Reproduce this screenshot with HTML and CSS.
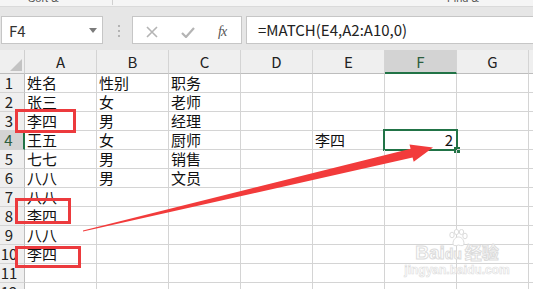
FILE: index.html
```html
<!DOCTYPE html>
<html lang="zh-CN">
<head>
<meta charset="utf-8">
<title>MATCH</title>
<link rel="stylesheet" href="styles.css">
</head>
<body>
<div class="app">
  <div class="ribbon-tail">
    <div class="ribbon-row">
      <span class="rt rt1">Sort &amp;</span>
      <span class="rt rt2">▫</span>
      <span class="rt-sep"></span>
      <span class="rt rt3">Find &amp;</span>
    </div>
  </div>

  <div class="formula-bar">
    <div class="namebox">
      <span class="namebox-text">F4</span>
      <svg class="namebox-caret" width="8" height="5" viewBox="0 0 8 5"><path d="M0 0H8L4 5Z" fill="#7b7b7b"/></svg>
    </div>
    <div class="grip"><i></i><i></i><i></i></div>
    <div class="fx-buttons">
      <svg class="fx-cancel" width="12" height="12" viewBox="0 0 12 12"><path d="M1 1L11 11M11 1L1 11" stroke="#b4b4b4" stroke-width="1.6" fill="none"/></svg>
      <svg class="fx-enter" width="14" height="11" viewBox="0 0 14 11"><path d="M1 6L5 10L13 1" stroke="#b4b4b4" stroke-width="2.2" fill="none"/></svg>
      <span class="fx-label">fx</span>
    </div>
    <div class="formula-input">=MATCH(E4,A2:A10,0)</div>
  </div>

  <div class="sheet">
    <div class="corner"><svg width="12" height="12" viewBox="0 0 12 12"><path d="M12 0V12H0Z" fill="#c3c3c3"/></svg></div>
    <div class="colhead">A</div>
    <div class="colhead">B</div>
    <div class="colhead">C</div>
    <div class="colhead">D</div>
    <div class="colhead">E</div>
    <div class="colhead is-active">F</div>
    <div class="colhead">G</div>
    <div class="colhead colhead-rest"></div>

    <div class="rowhead">1</div><div class="cell">姓名</div><div class="cell">性别</div><div class="cell">职务</div><div class="cell"></div><div class="cell"></div><div class="cell"></div><div class="cell"></div><div class="cell cell-rest"></div>
    <div class="rowhead">2</div><div class="cell">张三</div><div class="cell">女</div><div class="cell">老师</div><div class="cell"></div><div class="cell"></div><div class="cell"></div><div class="cell"></div><div class="cell cell-rest"></div>
    <div class="rowhead">3</div><div class="cell">李四</div><div class="cell">男</div><div class="cell">经理</div><div class="cell"></div><div class="cell"></div><div class="cell"></div><div class="cell"></div><div class="cell cell-rest"></div>
    <div class="rowhead is-active">4</div><div class="cell">王五</div><div class="cell">女</div><div class="cell">厨师</div><div class="cell"></div><div class="cell">李四</div><div class="cell cell-num is-selected">2<span class="selection"><span class="fill-handle"></span></span></div><div class="cell"></div><div class="cell cell-rest"></div>
    <div class="rowhead">5</div><div class="cell">七七</div><div class="cell">男</div><div class="cell">销售</div><div class="cell"></div><div class="cell"></div><div class="cell"></div><div class="cell"></div><div class="cell cell-rest"></div>
    <div class="rowhead">6</div><div class="cell">八八</div><div class="cell">男</div><div class="cell">文员</div><div class="cell"></div><div class="cell"></div><div class="cell"></div><div class="cell"></div><div class="cell cell-rest"></div>
    <div class="rowhead">7</div><div class="cell">八八</div><div class="cell"></div><div class="cell"></div><div class="cell"></div><div class="cell"></div><div class="cell"></div><div class="cell"></div><div class="cell cell-rest"></div>
    <div class="rowhead">8</div><div class="cell">李四</div><div class="cell"></div><div class="cell"></div><div class="cell"></div><div class="cell"></div><div class="cell"></div><div class="cell"></div><div class="cell cell-rest"></div>
    <div class="rowhead">9</div><div class="cell">八八</div><div class="cell"></div><div class="cell"></div><div class="cell"></div><div class="cell"></div><div class="cell"></div><div class="cell"></div><div class="cell cell-rest"></div>
    <div class="rowhead">10</div><div class="cell">李四</div><div class="cell"></div><div class="cell"></div><div class="cell"></div><div class="cell"></div><div class="cell"></div><div class="cell"></div><div class="cell cell-rest"></div>
    <div class="rowhead">11</div><div class="cell"></div><div class="cell"></div><div class="cell"></div><div class="cell"></div><div class="cell"></div><div class="cell"></div><div class="cell"></div><div class="cell cell-rest"></div>
    <div class="rowhead">12</div><div class="cell"></div><div class="cell"></div><div class="cell"></div><div class="cell"></div><div class="cell"></div><div class="cell"></div><div class="cell"></div><div class="cell cell-rest"></div>
  </div>

  <svg class="annotations" width="533" height="289" viewBox="0 0 533 289">
    <g fill="none" stroke="#ec3a3d" stroke-width="3">
      <rect x="16.5" y="110.5" width="58" height="21"/>
      <rect x="16.5" y="199.5" width="53" height="23"/>
      <rect x="16.5" y="247.5" width="63" height="19"/>
    </g>
    <path fill="#f23b3b" d="M83 230.6 L410.6 148.7 L409.5 144.4 L433 147.6 L413.7 161.8 L412.6 157.5 L83 231.6 Z"/>
  </svg>

  <div class="watermark">
    <svg class="wm-paw" width="22" height="18" viewBox="0 0 22 18">
      <g fill="#fff" stroke="#dcdcdc" stroke-width="1">
        <ellipse cx="5" cy="6" rx="2.2" ry="2.8"/>
        <ellipse cx="9.5" cy="3" rx="2.2" ry="2.6"/>
        <ellipse cx="14.5" cy="3" rx="2.2" ry="2.6"/>
        <ellipse cx="18" cy="7" rx="2.2" ry="2.8"/>
        <path d="M6 15 C6 10 9 8 11.5 8 C14 8 17 10 17 15 C17 17 14 17 11.5 16 C9 17 6 17 6 15Z"/>
      </g>
    </svg>
    <div class="wm-brand"><span class="wm-bai">Bai</span><span class="wm-du">du</span><span class="wm-jy">经验</span></div>
    <div class="wm-url">jingyan.baidu.com</div>
  </div>
</div>
</body>
</html>
```

FILE: styles.css
```css
* { box-sizing: border-box; }

html, body {
  margin: 0;
  padding: 0;
  background: #ffffff;
}

body {
  font-family: "Noto Sans CJK SC", "Noto Sans", sans-serif;
  color: #1a1a1a;
}

.app {
  position: relative;
  width: 533px;
  height: 289px;
  overflow: hidden;
}

/* bottom sliver of the ribbon */
.ribbon-tail {
  height: 7px;
  background: #f5f5f5;
  border-bottom: 1px solid #dadada;
  overflow: hidden;
}

.ribbon-row {
  display: flex;
  align-items: flex-start;
  height: 14px;
  margin-top: -9px;
  font-family: "Liberation Sans", sans-serif;
  font-size: 11px;
  line-height: 14px;
  color: #555;
}

.rt1 { margin-left: 28px; width: 66px; }
.rt2 { margin-left: 6px; width: 12px; font-size: 10px; color: #777; }
.rt-sep { width: 1px; height: 14px; background: #d0d0d0; margin-left: 0; }
.rt3 { margin-left: 334px; }

/* formula bar */
.formula-bar {
  display: flex;
  align-items: flex-start;
  height: 43px;
  background: #e6e6e6;
  padding-top: 9px;
}

.namebox {
  display: flex;
  align-items: center;
  justify-content: space-between;
  margin-left: 1px;
  width: 102px;
  height: 28px;
  background: #fff;
  border: 1px solid #c6c6c6;
  padding: 0 5px 0 7px;
}

.namebox-text {
  font-size: 15px;
  color: #333;
  line-height: 1;
  margin-top: 1px;
}

.namebox-caret { margin-top: 1px; }

.grip {
  display: flex;
  flex-direction: column;
  gap: 3px;
  margin: 9px 12px 0 15px;
}

.grip i {
  display: block;
  width: 2px;
  height: 2px;
  background: #b3b3b3;
}

.fx-buttons {
  display: flex;
  align-items: center;
  width: 110px;
  height: 28px;
  background: #fff;
  border: 1px solid #c6c6c6;
  padding-top: 4px;
}

.fx-cancel { margin-left: 13px; }
.fx-enter { margin-left: 23px; }

.fx-label {
  margin-left: 23px;
  font-family: "Liberation Serif", "DejaVu Serif", serif;
  font-style: italic;
  font-size: 14px;
  color: #555;
  letter-spacing: -1px;
}

.formula-input {
  flex: 1;
  margin-left: 4px;
  height: 28px;
  background: #fff;
  border: 1px solid #c6c6c6;
  border-right: none;
  padding-left: 11px;
  font-size: 15px;
  line-height: 26px;
  color: #222;
}

/* sheet grid */
.sheet {
  display: grid;
  grid-template-columns: 25px repeat(7, 72px) 1fr;
  grid-template-rows: 24px repeat(12, 19px);
  background: #fff;
}

.corner {
  background: #efefef;
  border-right: 1px solid #d0d0d0;
  border-bottom: 1px solid #bdbdbd;
  display: flex;
  align-items: flex-end;
  justify-content: flex-end;
  padding: 0 2px 2px 0;
}

.colhead {
  background: #efefef;
  border-right: 1px solid #d4d4d4;
  border-bottom: 1px solid #bdbdbd;
  text-align: center;
  font-size: 15px;
  line-height: 23px;
  color: #222;
}

.colhead.is-active {
  background: #d3d3d3;
  border-bottom: 2px solid #217346;
  color: #2d5e3e;
}

.colhead-rest { border-right: none; }

.rowhead {
  background: #efefef;
  border-right: 1px solid #bdbdbd;
  border-bottom: 1px solid #d4d4d4;
  padding-right: 6px;
  text-align: center;
  font-size: 15px;
  line-height: 18px;
  color: #222;
  white-space: nowrap;
}

.rowhead.is-active {
  background: #d3d3d3;
  border-right: 2px solid #217346;
  color: #2d5e3e;
}

.cell {
  position: relative;
  border-right: 1px solid #d4d4d4;
  border-bottom: 1px solid #d4d4d4;
  padding-left: 2px;
  font-size: 15px;
  line-height: 18px;
  color: #111;
  white-space: nowrap;
}

.cell-rest { border-right: none; }

.cell-num {
  text-align: right;
  padding: 0 3px 0 0;
}

.selection {
  position: absolute;
  left: -2px;
  top: -2px;
  width: 75px;
  height: 22px;
  border: 2px solid #217346;
}

.fill-handle {
  position: absolute;
  right: -4px;
  bottom: -4px;
  width: 6px;
  height: 6px;
  background: #217346;
}

/* annotations lying over the sheet */
.annotations {
  position: absolute;
  left: 0;
  top: 0;
  pointer-events: none;
}

.watermark {
  position: absolute;
  left: 407px;
  top: 229px;
  width: 100px;
  display: flex;
  flex-direction: column;
  align-items: center;
  pointer-events: none;
}

.wm-paw { margin-left: 2px; }

.wm-brand {
  display: flex;
  align-items: baseline;
  margin-top: -5px;
  font-family: "Liberation Sans", sans-serif;
  font-weight: bold;
  font-size: 19px;
  line-height: 20px;
  color: #fff;
  -webkit-text-stroke: 1px #dcdcdc;
}

.wm-du { font-size: 14px; }

.wm-jy {
  font-family: "Noto Sans CJK SC", sans-serif;
  font-size: 17px;
  margin-left: 3px;
}

.wm-url {
  font-family: "Liberation Sans", sans-serif;
  font-weight: bold;
  font-size: 12px;
  line-height: 13px;
  color: #fff;
  -webkit-text-stroke: 0.6px #dcdcdc;
}
```
